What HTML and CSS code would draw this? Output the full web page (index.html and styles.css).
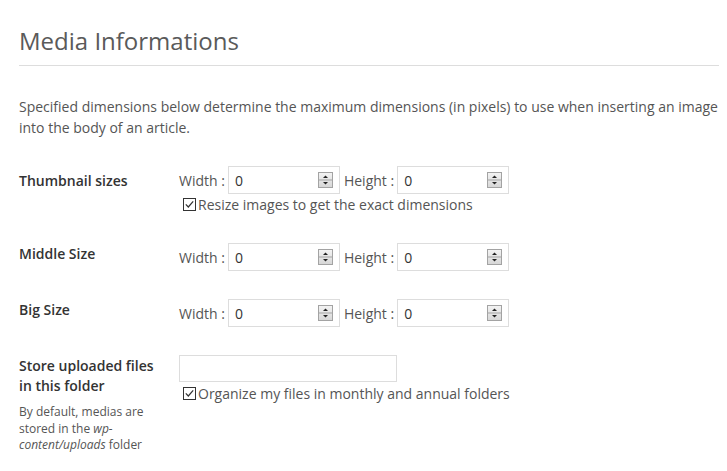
FILE: index.html
```html
<!DOCTYPE html>
<html lang="en">
<head>
    <meta charset="UTF-8">
    <meta name="viewport" content="width=device-width, initial-scale=1.0">
    <title>Media Informations</title>
    <link rel="stylesheet" href="styles.css">
</head>
<body>
    <div class="page">
        <h1 class="title">Media Informations</h1>
        <p class="intro">Specified dimensions below determine the maximum dimensions (in pixels) to use when inserting an image into the body of an article.</p>

        <div class="form">
            <div class="row">
                <div class="label label-low">Thumbnail sizes</div>
                <div class="field">
                    <div class="sizes">
                        <span>Width :</span>
                        <div class="num">
                            <input type="text" value="0">
                            <svg class="spin" width="15" height="16" viewBox="0 0 15 16"><defs><linearGradient id="g1" x1="0" y1="0" x2="0" y2="1"><stop offset="0" stop-color="#f4f4f4"/><stop offset="1" stop-color="#d6d6d6"/></linearGradient></defs><rect x="0.5" y="0.5" width="14" height="15" fill="url(#g1)" stroke="#a3a3a3"/><line x1="1" y1="8" x2="14" y2="8" stroke="#a3a3a3"/><path d="M7.5 3.5 L10 6 L5 6 Z" fill="#222"/><path d="M5 10 L10 10 L7.5 12.5 Z" fill="#222"/></svg>
                        </div>
                        <span>Height :</span>
                        <div class="num">
                            <input type="text" value="0">
                            <svg class="spin" width="15" height="16" viewBox="0 0 15 16"><rect x="0.5" y="0.5" width="14" height="15" fill="url(#g1)" stroke="#a3a3a3"/><line x1="1" y1="8" x2="14" y2="8" stroke="#a3a3a3"/><path d="M7.5 3.5 L10 6 L5 6 Z" fill="#222"/><path d="M5 10 L10 10 L7.5 12.5 Z" fill="#222"/></svg>
                        </div>
                    </div>
                    <label class="check"><svg width="13" height="13" viewBox="0 0 13 13"><rect x="0.5" y="0.5" width="12" height="12" fill="#fff" stroke="#333"/><path d="M2.8 6.4 L5.3 9 L10.2 3.4" fill="none" stroke="#333" stroke-width="1.2"/></svg>Resize images to get the exact dimensions</label>
                </div>
            </div>

            <div class="row">
                <div class="label">Middle Size</div>
                <div class="field">
                    <div class="sizes">
                        <span>Width :</span>
                        <div class="num">
                            <input type="text" value="0">
                            <svg class="spin" width="15" height="16" viewBox="0 0 15 16"><rect x="0.5" y="0.5" width="14" height="15" fill="url(#g1)" stroke="#a3a3a3"/><line x1="1" y1="8" x2="14" y2="8" stroke="#a3a3a3"/><path d="M7.5 3.5 L10 6 L5 6 Z" fill="#222"/><path d="M5 10 L10 10 L7.5 12.5 Z" fill="#222"/></svg>
                        </div>
                        <span>Height :</span>
                        <div class="num">
                            <input type="text" value="0">
                            <svg class="spin" width="15" height="16" viewBox="0 0 15 16"><rect x="0.5" y="0.5" width="14" height="15" fill="url(#g1)" stroke="#a3a3a3"/><line x1="1" y1="8" x2="14" y2="8" stroke="#a3a3a3"/><path d="M7.5 3.5 L10 6 L5 6 Z" fill="#222"/><path d="M5 10 L10 10 L7.5 12.5 Z" fill="#222"/></svg>
                        </div>
                    </div>
                </div>
            </div>

            <div class="row">
                <div class="label">Big Size</div>
                <div class="field">
                    <div class="sizes">
                        <span>Width :</span>
                        <div class="num">
                            <input type="text" value="0">
                            <svg class="spin" width="15" height="16" viewBox="0 0 15 16"><rect x="0.5" y="0.5" width="14" height="15" fill="url(#g1)" stroke="#a3a3a3"/><line x1="1" y1="8" x2="14" y2="8" stroke="#a3a3a3"/><path d="M7.5 3.5 L10 6 L5 6 Z" fill="#222"/><path d="M5 10 L10 10 L7.5 12.5 Z" fill="#222"/></svg>
                        </div>
                        <span>Height :</span>
                        <div class="num">
                            <input type="text" value="0">
                            <svg class="spin" width="15" height="16" viewBox="0 0 15 16"><rect x="0.5" y="0.5" width="14" height="15" fill="url(#g1)" stroke="#a3a3a3"/><line x1="1" y1="8" x2="14" y2="8" stroke="#a3a3a3"/><path d="M7.5 3.5 L10 6 L5 6 Z" fill="#222"/><path d="M5 10 L10 10 L7.5 12.5 Z" fill="#222"/></svg>
                        </div>
                    </div>
                </div>
            </div>

            <div class="row">
                <div class="label">
                    Store uploaded files in this folder
                    <p class="hint">By default, medias are stored in the <em>wp-content/uploads</em> folder</p>
                </div>
                <div class="field">
                    <input type="text" class="folder">
                    <label class="check check-gap"><svg width="13" height="13" viewBox="0 0 13 13"><rect x="0.5" y="0.5" width="12" height="12" fill="#fff" stroke="#333"/><path d="M2.8 6.4 L5.3 9 L10.2 3.4" fill="none" stroke="#333" stroke-width="1.2"/></svg>Organize my files in monthly and annual folders</label>
                </div>
            </div>
        </div>
    </div>
</body>
</html>
```

FILE: styles.css
```css
body {
    margin: 0;
    font-family: 'Open Sans', sans-serif;
    font-size: 14px;
    color: #555;
    background: #fff;
}
.page {
    width: 700px;
    padding: 25px 0 0 19px;
}
.title {
    margin: 0;
    padding-bottom: 8px;
    font-size: 24px;
    font-weight: 400;
    line-height: 32px;
    color: #5a5a5a;
    border-bottom: 1px solid #ddd;
}
.intro {
    margin: 30px 0 14px;
    line-height: 21px;
}
.row {
    display: grid;
    grid-template-columns: 160px 1fr;
    padding: 14px 0;
}
.label {
    padding: 1px 16px 0 0;
    font-weight: 600;
    line-height: 20px;
    color: #333;
}
.label-low {
    padding-top: 5px;
}
.hint {
    margin: 8px 0 0;
    font-size: 12px;
    font-weight: 400;
    line-height: 16.5px;
    color: #555;
}
.sizes {
    display: flex;
    align-items: center;
    gap: 4px;
}
.sizes span {
    margin-right: -1px;
}
.num {
    display: flex;
    align-items: center;
    width: 112px;
    height: 28px;
    box-sizing: border-box;
    border: 1px solid #ddd;
    background: #fff;
}
.num input {
    flex: 1;
    min-width: 0;
    border: none;
    outline: none;
    padding: 0 0 0 6px;
    font-family: 'Open Sans', sans-serif;
    font-size: 14px;
    color: #333;
    background: transparent;
}
.spin {
    margin-right: 6px;
}
.folder {
    display: block;
    width: 218px;
    height: 27px;
    box-sizing: border-box;
    border: 1px solid #ddd;
    padding: 0 6px;
    font-family: 'Open Sans', sans-serif;
    font-size: 14px;
}
.check {
    display: flex;
    align-items: center;
    gap: 2px;
    padding-left: 4px;
    line-height: 21px;
    color: #555;
}
.check-gap {
    margin-top: 1px;
}
```
